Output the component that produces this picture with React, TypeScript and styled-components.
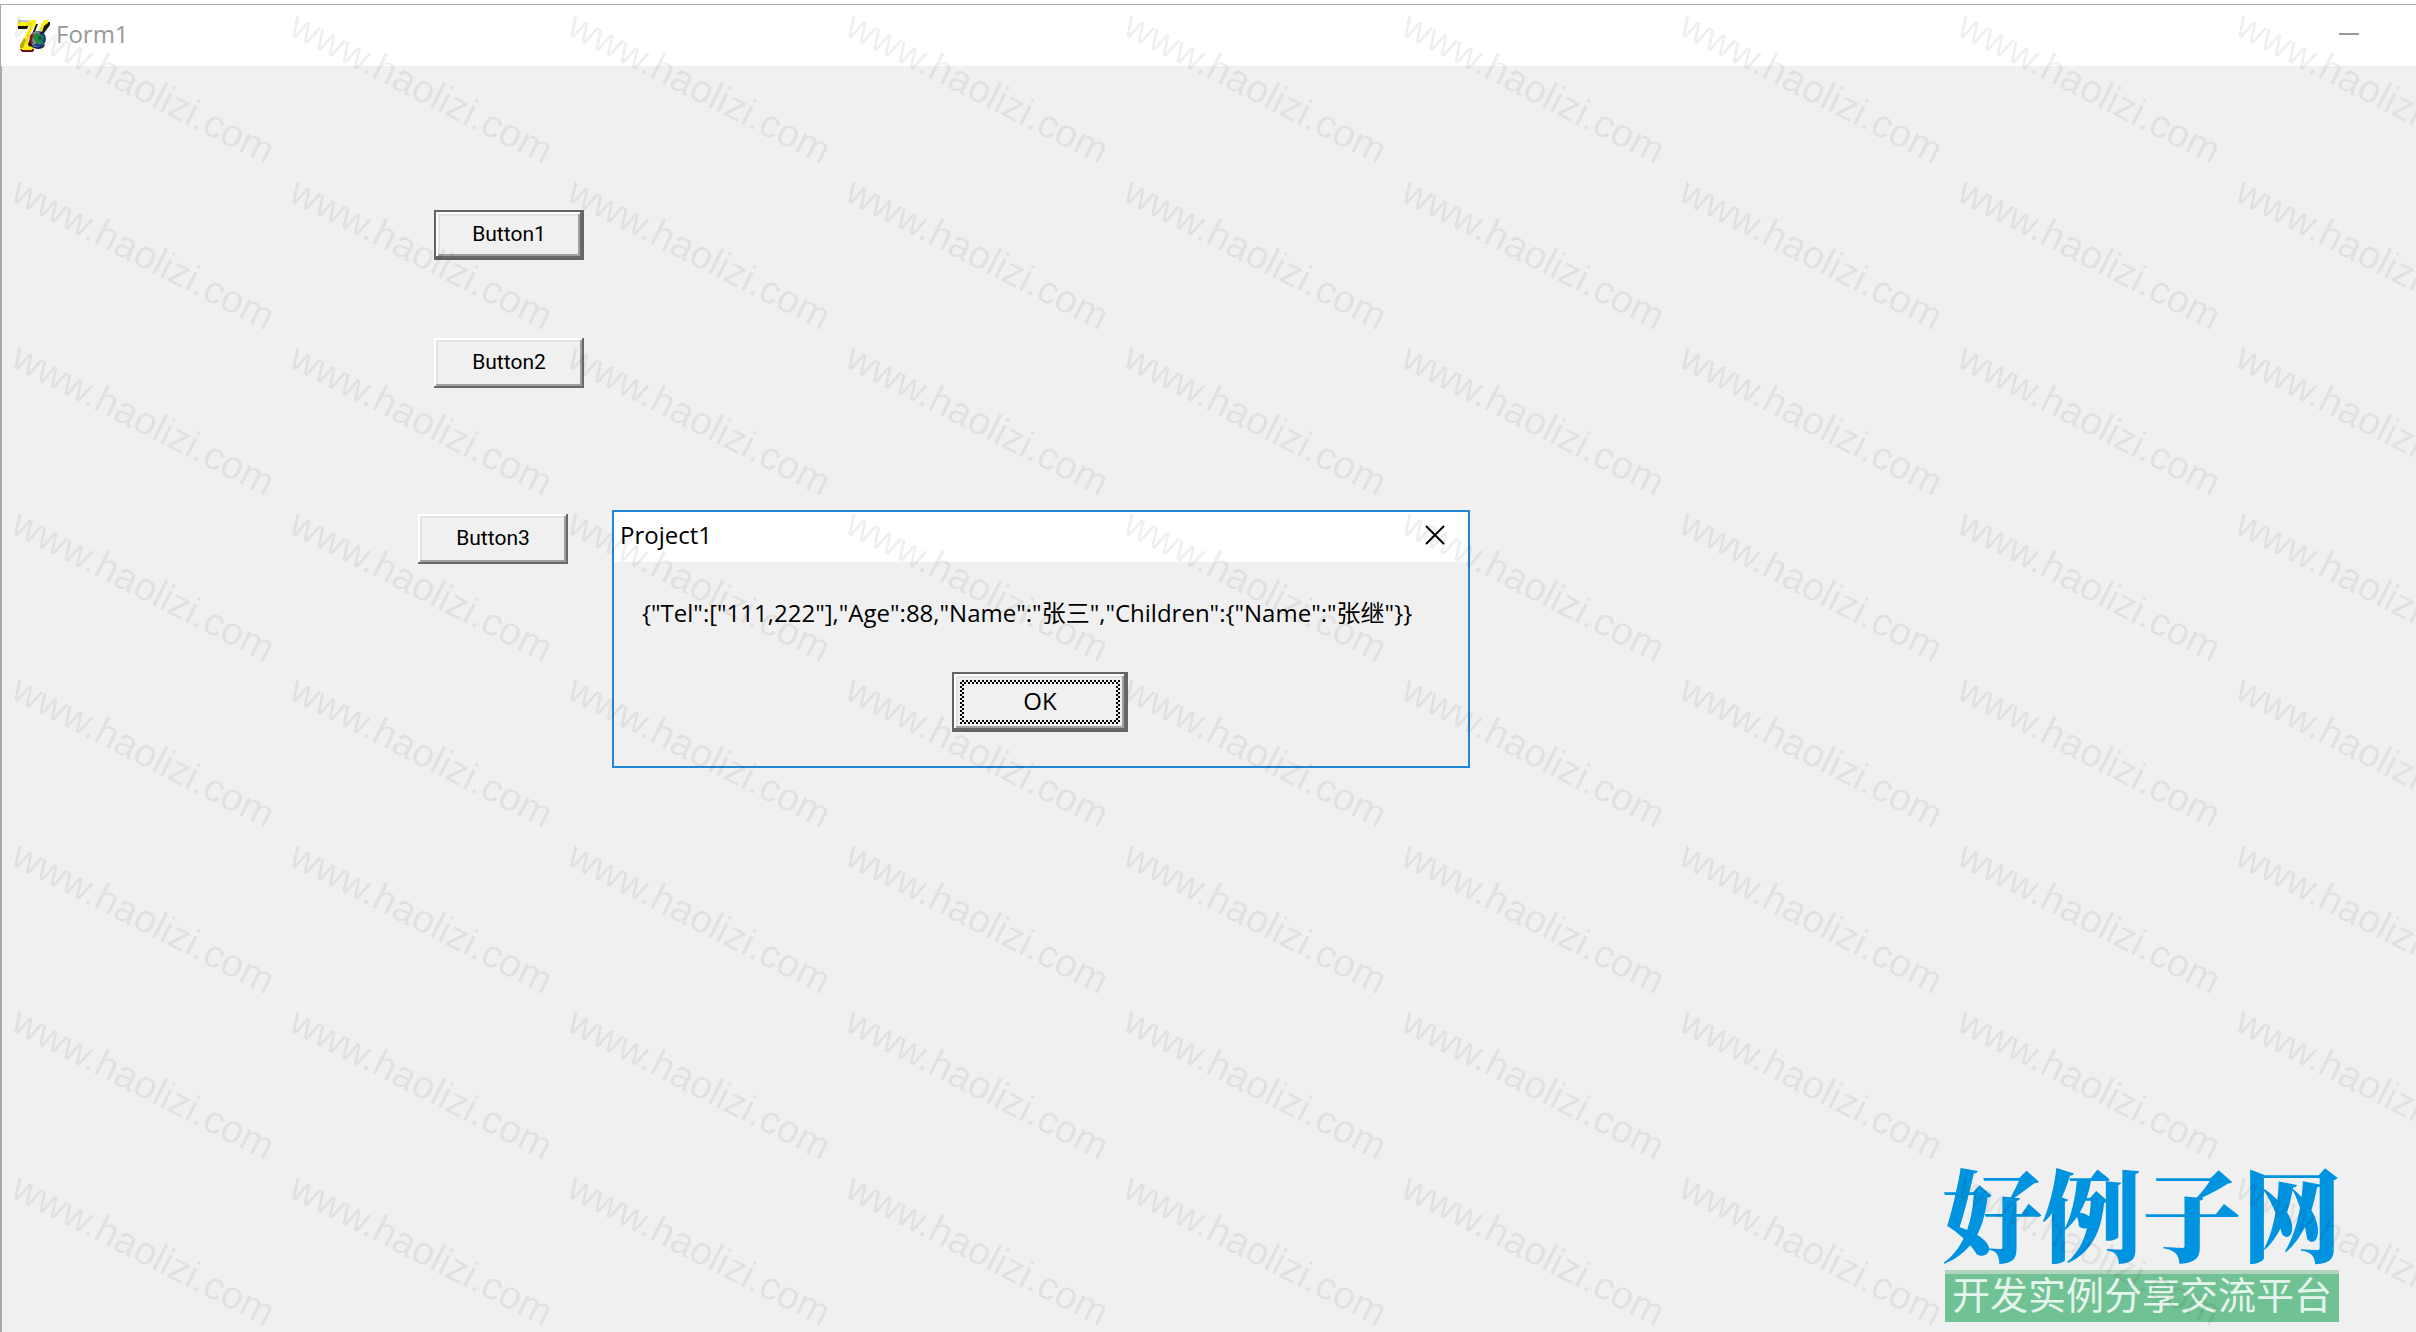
import React from "react";
import styled, { createGlobalStyle } from "styled-components";

const GlobalStyle = createGlobalStyle`
  * { box-sizing: border-box; }
  body { margin: 0; background: #f0f0f0; }
`;

const uiFont = `"Open Sans", "Noto Sans CJK SC", sans-serif`;

const Desktop = styled.div`
  position: relative;
  display: flex;
  flex-direction: column;
  min-height: 100vh;
  padding-top: 4px;
  overflow: hidden;
  background: #fff;
  font-family: ${uiFont};
`;

const TitleBar = styled.header`
  display: flex;
  align-items: center;
  justify-content: space-between;
  height: 62px;
  padding: 0 46px 0 17px;
  border-top: 1px solid #aaa;
  border-left: 1px solid #aaa;
  background: #fff;
`;

const TitleGroup = styled.div`
  display: flex;
  align-items: center;
  gap: 6px;
`;

const WindowTitle = styled.h1`
  margin: 0;
  padding-bottom: 4px;
  color: #999;
  font-size: 24px;
  font-weight: 400;
  line-height: 32px;
`;

const CaptionButton = styled.button`
  display: grid;
  place-items: center;
  width: 42px;
  height: 42px;
  padding: 0 0 4px;
  border: 0;
  background: transparent;
`;

const Form = styled.main`
  flex: 1;
  display: flex;
  flex-direction: column;
  align-items: flex-start;
  padding: 144px 0 0 416px;
  border-left: 2px solid #aaa;
  background: #f0f0f0;
`;

const ButtonPair = styled.div`
  display: flex;
  flex-direction: column;
  gap: 78px;
  margin: 0 0 126px 16px;
`;

const ClassicButton = styled.button<{ $default?: boolean }>`
  width: 150px;
  height: 50px;
  padding: 0 0 2px;
  border: 0;
  background: #f0f0f0;
  color: #000;
  font-family: Roboto, sans-serif;
  font-size: 21px;
  line-height: 28px;
  box-shadow: ${({ $default }) =>
    $default
      ? `inset 2px 2px #646464, inset -2px -2px #646464, inset -4px -4px #696969,
         inset 4px 4px #fff, inset -6px -6px #a0a0a0, inset 6px 6px #e3e3e3`
      : `inset -2px -2px #696969, inset 2px 2px #fff,
         inset -4px -4px #a0a0a0, inset 4px 4px #e3e3e3`};
`;

const Dialog = styled.section`
  position: absolute;
  top: 510px;
  left: 612px;
  display: flex;
  flex-direction: column;
  width: 858px;
  height: 258px;
  border: 2px solid #2386d5;
  background: #f0f0f0;
`;

const DialogBar = styled.header`
  display: flex;
  align-items: center;
  justify-content: space-between;
  height: 50px;
  padding: 0 12px 0 6px;
  background: #fff;
`;

const DialogTitle = styled.h2`
  margin: 0;
  padding-bottom: 4px;
  font-size: 24px;
  font-weight: 400;
  line-height: 32px;
`;

const DialogBody = styled.div`
  display: flex;
  flex-direction: column;
  align-items: center;
  gap: 42px;
  padding: 34px 2px 0 0;
`;

const Message = styled.p`
  margin: 0;
  padding-left: 28px;
  align-self: flex-start;
  font-size: 24px;
  line-height: 34px;
  white-space: nowrap;
`;

const OkButton = styled(ClassicButton)`
  display: grid;
  width: 176px;
  height: 60px;
  padding: 8px;
  font-family: ${uiFont};
  font-size: 24px;
`;

const FocusFrame = styled.span`
  display: grid;
  place-items: center;
  padding-bottom: 2px;
  border: 4px solid transparent;
  background:
    linear-gradient(#f0f0f0, #f0f0f0) padding-box,
    repeating-conic-gradient(#000 0 25%, #f0f0f0 0 50%) 0 0 / 4px 4px border-box;
`;

const Brand = styled.aside`
  position: absolute;
  right: 77px;
  bottom: 10px;
  display: flex;
  flex-direction: column;
  align-items: center;
  gap: 7px;
  width: 394px;
`;

const BrandName = styled.strong`
  color: #0093e0;
  font-family: "Noto Serif CJK SC", "Noto Sans CJK SC", serif;
  font-size: 100px;
  font-weight: 900;
  line-height: 104px;
  white-space: nowrap;
`;

const BrandTagline = styled.span`
  align-self: stretch;
  padding-bottom: 10px;
  border-top: 4px solid #b0d4be;
  background: #70c193;
  color: #e6f5ec;
  font-family: "Noto Sans CJK SC", sans-serif;
  font-size: 38px;
  line-height: 38px;
  text-align: center;
  white-space: nowrap;
`;

const WatermarkLayer = styled.div`
  position: absolute;
  inset: 0;
  display: grid;
  grid-template-columns: repeat(9, 278px);
  grid-auto-rows: 166px;
  overflow: hidden;
  pointer-events: none;
`;

const Watermark = styled.span`
  padding-left: 9px;
  color: rgba(0, 0, 0, 0.08);
  font-family: "Liberation Sans", Arial, sans-serif;
  font-size: 39px;
  line-height: 42px;
  transform: rotate(27deg);
  transform-origin: 9px 34px;
  white-space: nowrap;
`;

const AppIcon = () => (
  <svg width="32" height="32" viewBox="0 0 32 32" aria-hidden="true">
    <path d="M0 0H12L10 3H0Z" fill="#c4c4c4" />
    <path d="M0 5H11L9 9H0ZM18 4H20L16 14L14 22L15 32H12L10 24Z" fill="#111" />
    <path d="M13 9L9 20L10 28H16V31H3V28L8 24Z" fill="#7b1010" />
    <path d="M0 2H11L13 0H18V4L14 10L10 20V26L16 27V29H2V25L5 20L12 6H0Z" fill="#f8ee12" />
    <path d="M2 25L6 18L8 20L5 28H2Z" fill="#b9a80c" />
    <path d="M2 29H15V32H4Z" fill="#6d0f0f" />
    <path d="M4 28H14V30H4Z" fill="#f8ee12" />
    <circle cx="20" cy="19" r="8" fill="#173f8c" />
    <path d="M20 11A8 8 0 0 0 15 25L19 23L17 19L22 13Z" fill="#8b8b8b" />
    <path d="M18 13L22 14L26 17L24 21L26 23L21 25L17 22L15 17Z" fill="#218b46" />
    <path d="M20 17L23 16L24 19L21 21Z" fill="#0d5e37" />
    <path d="M14 25Q20 30 27 24L26 27Q20 31 14 27Z" fill="#101b55" />
    <path d="M13 14Q10 19 13 25L15 23Q13 19 16 14Z" fill="#8c1717" />
    <path d="M27 2H32V5L26 13L22 14Z" fill="#161616" />
    <path d="M23 3H25L26 0H30V3L26 6L24 12L21 10L23 6Z" fill="#f8ee12" />
  </svg>
);

const watermarks = Array.from({ length: 72 }, (_, i) => i);

export default function App() {
  return (
    <Desktop>
      <GlobalStyle />
      <TitleBar>
        <TitleGroup>
          <AppIcon />
          <WindowTitle>Form1</WindowTitle>
        </TitleGroup>
        <CaptionButton aria-label="Minimize">
          <svg width="20" height="2" aria-hidden="true">
            <path d="M0 1H20" stroke="#999" strokeWidth="2" />
          </svg>
        </CaptionButton>
      </TitleBar>
      <Form>
        <ButtonPair>
          <ClassicButton $default>Button1</ClassicButton>
          <ClassicButton>Button2</ClassicButton>
        </ButtonPair>
        <ClassicButton>Button3</ClassicButton>
      </Form>
      <Dialog role="dialog" aria-labelledby="dialog-title">
        <DialogBar>
          <DialogTitle id="dialog-title">Project1</DialogTitle>
          <CaptionButton aria-label="Close">
            <svg width="20" height="20" viewBox="0 0 20 20" aria-hidden="true">
              <path d="M1 1L19 19M19 1L1 19" stroke="#000" strokeWidth="2" />
            </svg>
          </CaptionButton>
        </DialogBar>
        <DialogBody>
          <Message>
            {'{"Tel":["111,222"],"Age":88,"Name":"张三","Children":{"Name":"张继"}}'}
          </Message>
          <OkButton $default>
            <FocusFrame>OK</FocusFrame>
          </OkButton>
        </DialogBody>
      </Dialog>
      <Brand>
        <BrandName>好例子网</BrandName>
        <BrandTagline>开发实例分享交流平台</BrandTagline>
      </Brand>
      <WatermarkLayer aria-hidden="true">
        {watermarks.map((i) => (
          <Watermark key={i}>www.haolizi.com</Watermark>
        ))}
      </WatermarkLayer>
    </Desktop>
  );
}
